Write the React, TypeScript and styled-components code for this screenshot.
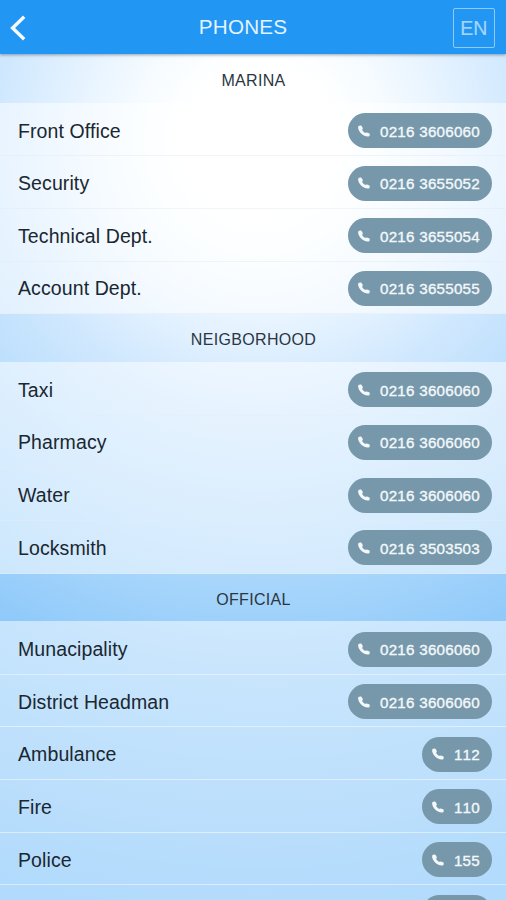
import React from 'react';
import styled, { createGlobalStyle } from 'styled-components';

const GlobalStyle = createGlobalStyle`
  * { box-sizing: border-box; }
  html, body { margin: 0; padding: 0; }
  body { overflow: hidden; }
`;

const Screen = styled.div`
  display: flex;
  flex-direction: column;
  width: 100%;
  height: 900px;
  overflow: hidden;
  font-family: 'Liberation Sans', Arial, Helvetica, sans-serif;
  background: radial-gradient(
    circle at 260px 140px,
    #ffffff 0, #ffffff 75px, #f5fbff 130px, #e4f2ff 195px, #d0e8fe 262px,
    #c1e1fd 325px, #a6d5fb 450px, #92cbfa 530px, #64b5f8 780px
  );
`;

const TopBar = styled.header`
  display: grid;
  grid-template-columns: 54px 1fr 54px;
  align-items: center;
  flex: none;
  height: 54px;
  color: #e4f3ff;
  background: #2196f3;
  box-shadow: 0 1px 3px rgba(0, 30, 70, 0.4);
  z-index: 1;
`;

const BackButton = styled.button`
  display: flex;
  padding: 2px 0 0 9px;
  border: 0;
  color: #f4faff;
  background: none;
`;

const Title = styled.h1`
  margin: 0;
  padding-right: 20px;
  text-align: center;
  font-size: 20.7px;
  font-weight: 400;
  letter-spacing: 0.15px;
  line-height: 54px;
`;

const LanguageButton = styled.button`
  width: 42.5px;
  height: 40px;
  margin-top: 1px;
  margin-left: 0.5px;
  padding: 2px 0 0;
  border: 1.5px solid #8ecbfa;
  border-radius: 2px;
  color: #a5d5fb;
  background: none;
  font-family: inherit;
  font-size: 19.5px;
  -webkit-text-stroke: 0.2px currentColor;
`;

const List = styled.main`
  flex: 1;
  min-height: 0;
  padding-top: 1px;
  overflow: hidden;
`;

const SectionTitle = styled.h2`
  height: 47.7px;
  margin: 0;
  padding: 2px 0 0 1px;
  text-align: center;
  font-size: 16px;
  font-weight: 400;
  letter-spacing: 0.33px;
  line-height: 48px;
  color: #2b363f;
`;

const Rows = styled.div`
  padding-top: 1px;
  background: rgba(255, 255, 255, 0.5);
`;

const Row = styled.div<{ $line: string }>`
  display: flex;
  align-items: center;
  justify-content: space-between;
  height: 52.65px;
  padding: 2px 14px 0 18px;
  border-bottom: 1px solid ${(p) => p.$line};
`;

const Name = styled.span`
  font-size: 19.5px;
  letter-spacing: 0.1px;
  line-height: 24px;
  color: #1b2730;
`;

const CallButton = styled.button`
  display: flex;
  align-items: center;
  min-width: 70px;
  height: 35px;
  padding: 1px 12px 0 9.5px;
  border: 0;
  border-radius: 18px;
  color: #f3f8fb;
  background: #7798ab;
  font-family: inherit;
  font-size: 15.2px;
  font-kerning: none;
  letter-spacing: 0.24px;
  -webkit-text-stroke: 0.35px currentColor;
`;

const IconSlot = styled.span`
  display: flex;
  flex: 1;
  min-width: 22px;
  padding-bottom: 1px;
`;

const PhoneIcon = () => (
  <svg width="12" height="12" viewBox="0 0 12 12" fill="currentColor">
    <path d="M.5 1.1C1.1.3 2.9.1 3.6.9C4.2 1.7 4.8 2.8 4.8 3.6C4.8 4.2 4.2 4.5 4.2 4.9C4.5 5.9 5.9 7.3 6.9 7.7C7.6 7.9 8.1 7.4 8.8 7.5L11.1 8.2C12 8.6 12 10.4 11.2 11.2C10.3 11.9 7.8 11.5 5.9 10.6C3.2 9.2.7 6 .2 3.4C.1 2.5.1 1.6.5 1.1Z" />
  </svg>
);

type Entry = [string, string];
type Section = { title: string; line: string; entries: Entry[] };

const sections: Section[] = [
  {
    title: 'MARINA',
    line: 'rgba(228, 236, 240, 0.5)',
    entries: [
      ['Front Office', '0216 3606060'],
      ['Security', '0216 3655052'],
      ['Technical Dept.', '0216 3655054'],
      ['Account Dept.', '0216 3655055'],
    ],
  },
  {
    title: 'NEIGBORHOOD',
    line: 'rgba(228, 238, 246, 0.45)',
    entries: [
      ['Taxi', '0216 3606060'],
      ['Pharmacy', '0216 3606060'],
      ['Water', '0216 3606060'],
      ['Locksmith', '0216 3503503'],
    ],
  },
  {
    title: 'OFFICIAL',
    line: 'rgba(240, 246, 252, 0.65)',
    entries: [
      ['Munacipality', '0216 3606060'],
      ['District Headman', '0216 3606060'],
      ['Ambulance', '112'],
      ['Fire', '110'],
      ['Police', '155'],
      ['', ''],
    ],
  },
];

export default function App() {
  return (
    <Screen>
      <GlobalStyle />
      <TopBar>
        <BackButton aria-label="Back">
          <svg width="18" height="26" viewBox="0 0 18 26" fill="none" stroke="currentColor" strokeWidth="3.4">
            <path d="M15.2 1.8 3.6 13 15.2 24.2" />
          </svg>
        </BackButton>
        <Title>PHONES</Title>
        <LanguageButton>EN</LanguageButton>
      </TopBar>
      <List>
        {sections.map((section) => (
          <section key={section.title}>
            <SectionTitle>{section.title}</SectionTitle>
            <Rows>
              {section.entries.map(([name, phone]) => (
                <Row key={name} $line={section.line}>
                  <Name>{name}</Name>
                  <CallButton>
                    <IconSlot><PhoneIcon /></IconSlot>
                    {phone}
                  </CallButton>
                </Row>
              ))}
            </Rows>
          </section>
        ))}
      </List>
    </Screen>
  );
}
